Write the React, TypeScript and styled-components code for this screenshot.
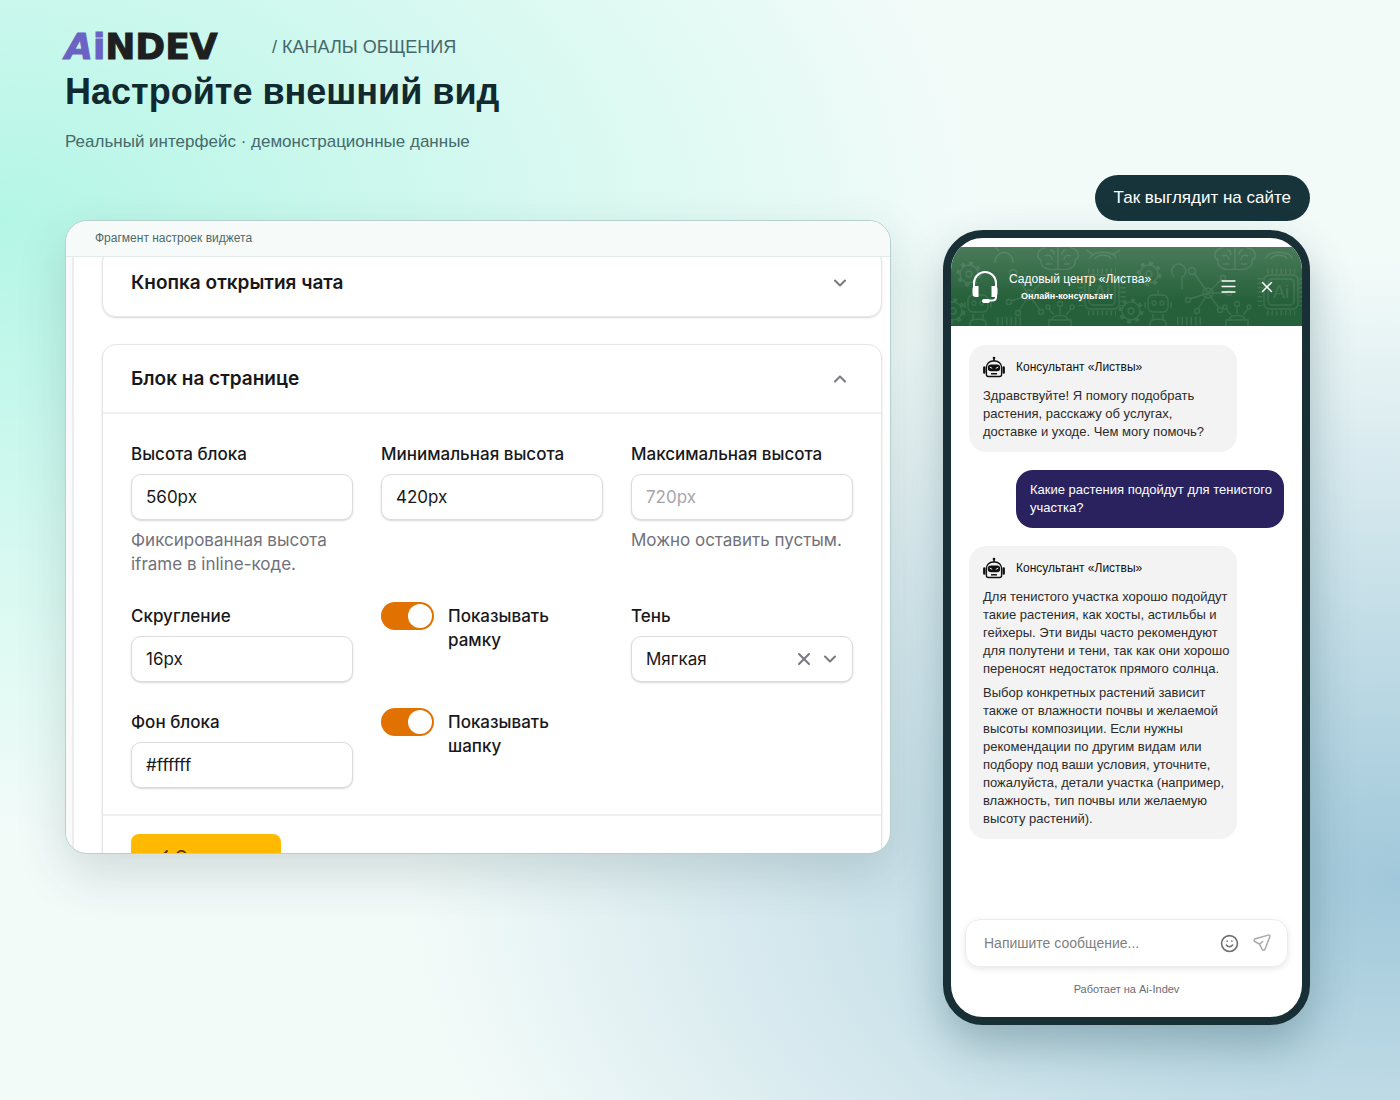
import React, { useState } from "react";
import styled, { createGlobalStyle } from "styled-components";
import { Check, ChevronDown, ChevronUp, Menu, Smile, X } from "lucide-react";

const sans = `"Liberation Sans", Arial, sans-serif`;
const inter = `Inter, "Liberation Sans", sans-serif`;

const GlobalStyle = createGlobalStyle`
  *, *::before, *::after { box-sizing: border-box; }
  body { margin: 0; font-family: ${sans}; }
  button, input, select { font: inherit; color: inherit; }
  h1, h2, p { margin: 0; }
`;

const Page = styled.div`
  min-height: 100vh;
  padding: 32px 90px 75px 65px;
  background:
    radial-gradient(ellipse at 0% 20%, #b4f6e6 0, rgba(180, 246, 230, 0) 50%),
    radial-gradient(ellipse at 100% 80%, #a1c8da 0, rgba(161, 200, 218, 0) 50%),
    #f3fbf9;
`;

const PageHeader = styled.header`
  height: 143px;
`;

const Brand = styled.div`
  display: flex;
  align-items: center;
  gap: 22px;
  height: 30px;
`;

const Wordmark = styled.a`
  width: 185px;
  font: 900 36px/30px "DejaVu Sans", sans-serif;
  color: #1d1f20;
  text-decoration: none;
  -webkit-text-stroke: 1px currentColor;
`;

const WordmarkAccent = styled.span<{ $slanted?: boolean }>`
  color: #6a63c4;
  font-style: ${(p) => (p.$slanted ? "oblique" : "normal")};
`;

const Crumb = styled.span`
  font-size: 18px;
  color: #45686a;
`;

const Title = styled.h1`
  margin-top: 8px;
  font-size: 36px;
  line-height: 44px;
  color: #102a30;
`;

const Subtitle = styled.p`
  margin-top: 18px;
  font-size: 17px;
  line-height: 20px;
  color: #456a6b;
`;

const Columns = styled.main`
  display: grid;
  grid-template-columns: minmax(0, 1fr) 367px;
  gap: 52px;
  align-items: start;
`;

const SettingsCard = styled.section`
  height: 634px;
  margin-top: 45px;
  overflow: hidden;
  border: 1px solid #b5d0cd;
  border-radius: 22px;
  background: #fff;
  box-shadow: 0 20px 50px rgba(24, 56, 62, 0.16);
  font-family: ${inter};
  color: #18181b;
`;

const CardCaption = styled.div`
  padding: 0 29px;
  border-bottom: 1px solid #e2ecea;
  background: #f6fbfa;
  font: 12px/35px ${sans};
  color: #4d6a6b;
`;

const CardBody = styled.div`
  height: 600px;
  padding: 0 8px 0 28px;
  overflow: hidden;
  border-left: 6px solid #fafafa;
  box-shadow: inset 2px 0 0 #ececee;
`;

const Panel = styled.section<{ $cropped?: boolean }>`
  margin: ${(p) => (p.$cropped ? "-9px" : "27px")} 0 0 2px;
  border: 1px solid #e6e6e8;
  border-radius: 14px;
  box-shadow: 0 1px 2px rgba(0, 0, 0, 0.16);
`;

const PanelHeader = styled.button`
  display: flex;
  align-items: center;
  justify-content: space-between;
  width: 100%;
  height: 67px;
  padding: 0 31px 0 28px;
  border: 0;
  background: none;
  font-size: 19px;
  font-weight: 600;
`;

const Fields = styled.div`
  display: grid;
  grid-template-columns: repeat(3, minmax(0, 1fr));
  gap: 28px;
  padding: 28px 28px 26px;
  border-top: 2px solid #f0f0f1;
`;

const Field = styled.div`
  display: flex;
  flex-direction: column;
  gap: 8px;
  font-size: 17px;
  line-height: 24px;
`;

const FieldLabel = styled.label`
  font-weight: 500;
`;

const control = `
  width: 100%;
  height: 46px;
  border: 1px solid #dcdcde;
  border-radius: 10px;
  background: #fff;
  box-shadow: 0 1px 2px rgba(0, 0, 0, 0.16);
`;

const TextInput = styled.input`
  ${control}
  padding: 0 14px;
  &::placeholder { color: #a6a6ab; }
`;

const SelectBox = styled.div`
  ${control}
  display: flex;
  align-items: center;
  gap: 6px;
  padding: 0 12px 0 14px;
  color: #7b7b83;
`;

const Select = styled.select`
  flex: 1;
  min-width: 0;
  padding: 0;
  border: 0;
  appearance: none;
  background: none;
  color: #18181b;
`;

const IconButton = styled.button`
  display: flex;
  padding: 0;
  border: 0;
  background: none;
`;

const Hint = styled.p`
  color: #71717a;
`;

const ToggleField = styled.label`
  display: flex;
  align-items: flex-start;
  gap: 14px;
  font-size: 17px;
  font-weight: 500;
  line-height: 24px;
`;

const ToggleText = styled.span`
  max-width: 120px;
`;

const Toggle = styled.input`
  flex: none;
  width: 53px;
  height: 28px;
  margin: -2px 0 0;
  padding: 2px;
  appearance: none;
  border-radius: 14px;
  background: #a1a1aa;
  &::before {
    content: "";
    display: block;
    width: 24px;
    height: 24px;
    border-radius: 50%;
    background: #fff;
  }
  &:checked { background: #e17100; }
  &:checked::before { margin-left: 25px; }
`;

const PanelFooter = styled.div`
  padding: 18px 28px;
  border-top: 2px solid #f0f0f1;
`;

const SaveButton = styled.button`
  display: flex;
  align-items: center;
  justify-content: center;
  gap: 4px;
  width: 150px;
  height: 46px;
  padding: 0;
  border: 0;
  border-radius: 8px;
  background: #ffb900;
  font-size: 17px;
  font-weight: 500;
  color: #5c3a06;
`;

const Preview = styled.aside`
  display: flex;
  flex-direction: column;
  align-items: flex-end;
  gap: 9px;
`;

const PreviewBadge = styled.div`
  padding: 0 19px;
  border-radius: 23px;
  background: #17343b;
  font-size: 17px;
  line-height: 46px;
  color: #fff;
`;

const Phone = styled.section`
  display: flex;
  flex-direction: column;
  width: 100%;
  min-height: 795px;
  padding-top: 9px;
  overflow: hidden;
  border: 8px solid #182f35;
  border-radius: 40px;
  background: #fff;
  box-shadow: 0 20px 44px rgba(24, 66, 78, 0.3);
`;

const ChatHeader = styled.header`
  display: grid;
  grid-template-columns: 28px 1fr auto auto;
  align-items: center;
  height: 79px;
  padding: 0 26px 0 20px;
  position: relative;
  background: linear-gradient(#4a7b5a, #25603a 70%);
  color: #fff;
`;

const Pattern = styled.svg`
  position: absolute;
  inset: 0;
  width: 100%;
  height: 100%;
  opacity: 0.1;
`;

const HeaderIcon = styled.svg`
  position: relative;
`;

const ChatTitles = styled.div`
  position: relative;
  padding-left: 10px;
`;

const ChatTitle = styled.h2`
  font-size: 12px;
  font-weight: 400;
  line-height: 18px;
`;

const ChatRole = styled.p`
  padding-left: 12px;
  font-size: 9px;
  font-weight: 700;
  line-height: 16px;
`;

const HeaderButton = styled(IconButton)`
  position: relative;
  margin-left: 20px;
`;

const Conversation = styled.div`
  display: flex;
  flex: 1;
  flex-direction: column;
  gap: 18px;
  padding: 19px 18px;
`;

const Bubble = styled.article<{ $own?: boolean }>`
  align-self: ${(p) => (p.$own ? "flex-end" : "flex-start")};
  width: 268px;
  padding: 11px 4px 11px 14px;
  border-radius: 17px;
  background: ${(p) => (p.$own ? "#29225f" : "#f3f3f3")};
  font-size: 13px;
  line-height: 18px;
  white-space: pre-line;
  color: ${(p) => (p.$own ? "#fff" : "#2b2b2b")};
  p + p { margin-top: 6px; }
`;

const Author = styled.div`
  display: flex;
  align-items: center;
  gap: 11px;
  height: 22px;
  margin-bottom: 9px;
  font-size: 12px;
  color: #111;
`;

const Composer = styled.form`
  display: flex;
  align-items: center;
  gap: 14px;
  height: 48px;
  margin: 0 14px;
  padding: 0 16px 0 18px;
  border: 1px solid #ececec;
  border-radius: 15px;
  box-shadow: 0 2px 6px rgba(0, 0, 0, 0.1);
  color: #777;
`;

const MessageInput = styled.input`
  flex: 1;
  min-width: 0;
  padding: 0;
  border: 0;
  outline: 0;
  font-size: 14px;
  &::placeholder { color: #7f7f7f; }
`;

const PoweredBy = styled.p`
  padding: 14px 0 20px;
  font-size: 11px;
  line-height: 16px;
  text-align: center;
  color: #6b6b75;
`;

function Robot() {
  return (
    <svg width="22" height="22" viewBox="0 0 22 22" fill="none" stroke="#111" aria-hidden="true">
      <path d="M11 1v4" strokeWidth="1.6" />
      <circle cx="11" cy="2" r="1.3" fill="#111" stroke="none" />
      <path d="M3.4 18.5V11a6.5 6.5 0 0 1 6.5-6h2.2a6.5 6.5 0 0 1 6.5 6v7.500q0 2-2 2H5.400q-2 0-2-2Z" strokeWidth="1.4" />
      <path d="M1.300 11.500v5M20.700 11.500v5" strokeWidth="2.400" strokeLinecap="round" />
      <rect x="4.800" y="8.500" width="12.400" height="6.800" rx="3.200" fill="#111" stroke="none" />
      <path d="m6.700 11 2.500 1.400M15.300 11l-2.500 1.400" stroke="#f3f3f3" strokeWidth="1" />
      <path d="M8 17.800h6" strokeWidth="1.500" />
    </svg>
  );
}

function Headset() {
  return (
    <HeaderIcon width="28" height="34" viewBox="0 0 28 34" fill="none" stroke="#fff" aria-hidden="true">
      <path d="M3 18v-5a11 11 0 0 1 22 0v14q0 3.500-4 3.500h-5" strokeWidth="2" />
      <path d="M7.500 16v11H5q-3.500 0-3.500-3.500V19q0-3 3-3ZM20.500 16v11H23q3.500 0 3.500-3.500V19q0-3-3-3Z" fill="#fff" stroke="none" />
      <rect x="11" y="29" width="8" height="4" rx="2" fill="#fff" stroke="none" />
    </HeaderIcon>
  );
}

function HeaderPattern() {
  return (
    <Pattern viewBox="0 0 351 79" preserveAspectRatio="xMidYMid slice" fill="none" stroke="#fff" strokeWidth="1.400" aria-hidden="true">
      <defs>
        <g id="gear">
          <circle r="9" />
          <circle r="3" />
          <circle r="11" strokeWidth="3" strokeDasharray="4 4.600" />
        </g>
        <g id="chip">
          <rect x="-13" y="-13" width="26" height="26" rx="4" />
          <rect x="-17" y="-17" width="34" height="34" rx="5" />
          <path d="M-14-21h28M-14 21h28M-21-14v28M21-14v28" strokeWidth="5" strokeDasharray="1.500 3" />
          <text y="6" textAnchor="middle" fontSize="18" fill="#fff" stroke="none">Ai</text>
        </g>
        <g id="brain">
          <path d="M0-14c-5-6-13-3-13 3-8 1-9 10-4 12-1 8 7 11 17 9V-14c5-6 13-3 13 3 8 1 9 10 4 12 1 8-7 11-17 9M-13-3c4-2 7 0 7 4M-8-9q4 0 4 5M13-3c-4-2-7 0-7 4M8-9q-4 0-4 5M-12 5h6M12 5H6" />
        </g>
        <g id="bot">
          <path d="M0-15v5M-13-3v6M13-3v6M-5 9v5M5 9v5M-8 18c0-5 16-5 16 0v8H-8Z" />
          <rect x="-10" y="-10" width="20" height="17" rx="5" />
          <circle cx="-4" cy="-2" r="2" />
          <circle cx="4" cy="-2" r="2" />
        </g>
        <g id="net">
          <path d="M0 0-14-20M0 0 13-13M0 0h19M0 0l11 15M0 0l-10 16M0 0l-18 6" />
          <circle r="5" />
          <circle cx="-16" cy="-22" r="3.500" />
          <circle cx="15" cy="-15" r="2.500" />
          <circle cx="21" r="2.500" />
          <circle cx="12" cy="17" r="2.500" />
          <circle cx="-11" cy="18" r="2.500" />
          <circle cx="-20" cy="7" r="2.500" />
        </g>
        <g id="hand">
          <path d="M-11 14V2h22v12M-8 2c0-6 16-6 16 0M0-4v-7M-6-3l-5-6M6-3l5-6" />
          <circle cy="-14" r="2.500" />
          <circle cx="-12" cy="-11" r="2" />
          <circle cx="12" cy="-11" r="2" />
        </g>
      </defs>
      <use href="#gear" x="18" y="27" />
      <use href="#brain" x="107" y="12" />
      <use href="#bot" x="27" y="58" />
      <use href="#chip" x="151" y="45" />
      <use href="#gear" x="198" y="27" />
      <use href="#bot" x="207" y="58" />
      <use href="#net" x="257" y="46" />
      <use href="#brain" x="284" y="12" />
      <use href="#chip" x="330" y="45" />
      <use href="#net" x="78" y="48" />
      <use href="#gear" x="180" y="64" />
      <use href="#gear" x="2" y="64" />
      <use href="#hand" x="109" y="71" />
      <use href="#hand" x="286" y="71" />
      <path d="M139 12c0-9 26-9 26 0M144 12c2-5 14-5 16 0M135 3l8 5M169 3l-8 5M315 12c0-9 26-9 26 0M320 12c2-5 14-5 16 0M44 16C44 2 62 2 62 16M48 4l-5-5M223 30c-6-8 2-16 8-12s4 10 0 12v12" />
      <path d="M46 74h26M226 74h26" strokeWidth="8" strokeDasharray="1.500 3" />
    </Pattern>
  );
}

function TextField({ id, label, value, placeholder, hint }: { id: string; label: string; value?: string; placeholder?: string; hint?: string }) {
  return (
    <Field>
      <FieldLabel htmlFor={id}>{label}</FieldLabel>
      <TextInput id={id} defaultValue={value} placeholder={placeholder} />
      {hint && <Hint>{hint}</Hint>}
    </Field>
  );
}

function ToggleRow({ label }: { label: string }) {
  return (
    <ToggleField>
      <Toggle type="checkbox" role="switch" defaultChecked />
      <ToggleText>{label}</ToggleText>
    </ToggleField>
  );
}

function BotMessage({ paragraphs }: { paragraphs: string[] }) {
  return (
    <Bubble>
      <Author>
        <Robot />
        <span>Консультант «Листвы»</span>
      </Author>
      {paragraphs.map((text) => (
        <p key={text}>{text}</p>
      ))}
    </Bubble>
  );
}

export default function App() {
  const [shadow, setShadow] = useState("soft");
  return (
    <>
      <GlobalStyle />
      <Page>
        <PageHeader>
          <Brand>
            <Wordmark href="#">
              <WordmarkAccent $slanted>A</WordmarkAccent>
              <WordmarkAccent>i</WordmarkAccent>NDEV
            </Wordmark>
            <Crumb>/ КАНАЛЫ ОБЩЕНИЯ</Crumb>
          </Brand>
          <Title>Настройте внешний вид</Title>
          <Subtitle>Реальный интерфейс · демонстрационные данные</Subtitle>
        </PageHeader>
        <Columns>
          <SettingsCard>
            <CardCaption>Фрагмент настроек виджета</CardCaption>
            <CardBody>
              <Panel $cropped>
                <PanelHeader type="button" aria-expanded={false}>
                  Кнопка открытия чата
                  <ChevronDown size={20} strokeWidth={2.5} color="#7b7b83" />
                </PanelHeader>
              </Panel>
              <Panel>
                <PanelHeader type="button" aria-expanded>
                  Блок на странице
                  <ChevronUp size={20} strokeWidth={2.5} color="#7b7b83" />
                </PanelHeader>
                <Fields>
                  <TextField id="height" label="Высота блока" value="560px" hint="Фиксированная высота iframe в inline-коде." />
                  <TextField id="min-height" label="Минимальная высота" value="420px" />
                  <TextField id="max-height" label="Максимальная высота" placeholder="720px" hint="Можно оставить пустым." />
                  <TextField id="radius" label="Скругление" value="16px" />
                  <ToggleRow label="Показывать рамку" />
                  <Field>
                    <FieldLabel htmlFor="shadow">Тень</FieldLabel>
                    <SelectBox>
                      <Select id="shadow" value={shadow} onChange={(e) => setShadow(e.target.value)}>
                        <option value="soft">Мягкая</option>
                        <option value="">—</option>
                      </Select>
                      <IconButton type="button" aria-label="Очистить" onClick={() => setShadow("")}>
                        <X size={20} strokeWidth={2.5} color="#7b7b83" />
                      </IconButton>
                      <ChevronDown size={20} strokeWidth={2.5} />
                    </SelectBox>
                  </Field>
                  <TextField id="background" label="Фон блока" value="#ffffff" />
                  <ToggleRow label="Показывать шапку" />
                </Fields>
                <PanelFooter>
                  <SaveButton type="button">
                    <Check size={24} />
                    Сохранить
                  </SaveButton>
                </PanelFooter>
              </Panel>
            </CardBody>
          </SettingsCard>
          <Preview>
            <PreviewBadge>Так выглядит на сайте</PreviewBadge>
            <Phone>
              <ChatHeader>
                <HeaderPattern />
                <Headset />
                <ChatTitles>
                  <ChatTitle>Садовый центр «Листва»</ChatTitle>
                  <ChatRole>Онлайн-консультант</ChatRole>
                </ChatTitles>
                <HeaderButton type="button" aria-label="Меню">
                  <Menu size={19} strokeWidth={2} color="#fff" />
                </HeaderButton>
                <HeaderButton type="button" aria-label="Закрыть">
                  <X size={18} strokeWidth={2} color="#fff" />
                </HeaderButton>
              </ChatHeader>
              <Conversation>
                <BotMessage paragraphs={["Здравствуйте! Я помогу подобрать\nрастения, расскажу об услугах,\nдоставке и уходе. Чем могу помочь?"]} />
                <Bubble $own>
                  <p>{"Какие растения подойдут для тенистого\nучастка?"}</p>
                </Bubble>
                <BotMessage
                  paragraphs={[
                    "Для тенистого участка хорошо подойдут\nтакие растения, как хосты, астильбы и\nгейхеры. Эти виды часто рекомендуют\nдля полутени и тени, так как они хорошо\nпереносят недостаток прямого солнца.",
                    "Выбор конкретных растений зависит\nтакже от влажности почвы и желаемой\nвысоты композиции. Если нужны\nрекомендации по другим видам или\nподбору под ваши условия, уточните,\nпожалуйста, детали участка (например,\nвлажность, тип почвы или желаемую\nвысоту растений).",
                  ]}
                />
              </Conversation>
              <Composer onSubmit={(e) => e.preventDefault()}>
                <MessageInput aria-label="Сообщение" placeholder="Напишите сообщение..." />
                <IconButton type="button" aria-label="Эмодзи">
                  <Smile size={19} color="#707070" />
                </IconButton>
                <IconButton type="submit" aria-label="Отправить">
                  <svg width="18" height="18" viewBox="0 0 18 18" fill="none" stroke="#a9a9a9" strokeWidth="1.500" strokeLinejoin="round" strokeLinecap="round" aria-hidden="true">
                    <path d="M15.300 1.100 2.300 4.800c-1.500.4-1.700 1.900-.4 2.700l4.600 2.600 2.700 5.200c.8 1.500 2.400 1.300 2.900-.2l4.600-12.200c.4-1.200-.3-2.100-1.400-1.800ZM6.500 10.100l3.300-2.600" />
                  </svg>
                </IconButton>
              </Composer>
              <PoweredBy>Работает на Ai-Indev</PoweredBy>
            </Phone>
          </Preview>
        </Columns>
      </Page>
    </>
  );
}
